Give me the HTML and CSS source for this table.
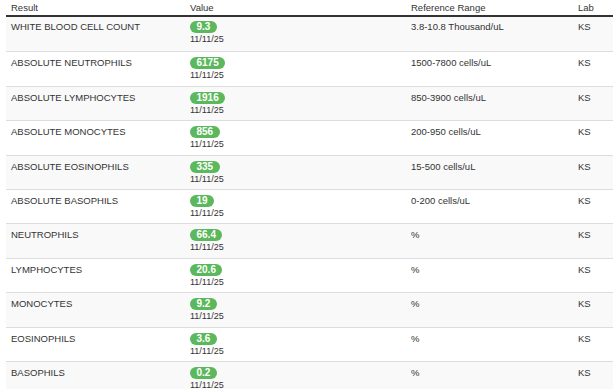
FILE: index.html
```html
<!DOCTYPE html>
<html>
<head>
<meta charset="utf-8">
<link rel="stylesheet" href="styles.css">
</head>
<body>
<table class="results">
  <colgroup>
    <col class="c-name"><col class="c-val"><col class="c-range"><col class="c-lab">
  </colgroup>
  <thead>
    <tr><th>Result</th><th>Value</th><th>Reference Range</th><th>Lab</th></tr>
  </thead>
  <tbody>
    <tr><td>WHITE BLOOD CELL COUNT</td><td><span class="badge">9.3</span><div class="date">11/11/25</div></td><td>3.8-10.8 Thousand/uL</td><td>KS</td></tr>
    <tr><td>ABSOLUTE NEUTROPHILS</td><td><span class="badge">6175</span><div class="date">11/11/25</div></td><td>1500-7800 cells/uL</td><td>KS</td></tr>
    <tr><td>ABSOLUTE LYMPHOCYTES</td><td><span class="badge">1916</span><div class="date">11/11/25</div></td><td>850-3900 cells/uL</td><td>KS</td></tr>
    <tr><td>ABSOLUTE MONOCYTES</td><td><span class="badge">856</span><div class="date">11/11/25</div></td><td>200-950 cells/uL</td><td>KS</td></tr>
    <tr><td>ABSOLUTE EOSINOPHILS</td><td><span class="badge">335</span><div class="date">11/11/25</div></td><td>15-500 cells/uL</td><td>KS</td></tr>
    <tr><td>ABSOLUTE BASOPHILS</td><td><span class="badge">19</span><div class="date">11/11/25</div></td><td>0-200 cells/uL</td><td>KS</td></tr>
    <tr><td>NEUTROPHILS</td><td><span class="badge">66.4</span><div class="date">11/11/25</div></td><td>%</td><td>KS</td></tr>
    <tr><td>LYMPHOCYTES</td><td><span class="badge">20.6</span><div class="date">11/11/25</div></td><td>%</td><td>KS</td></tr>
    <tr><td>MONOCYTES</td><td><span class="badge">9.2</span><div class="date">11/11/25</div></td><td>%</td><td>KS</td></tr>
    <tr><td>EOSINOPHILS</td><td><span class="badge">3.6</span><div class="date">11/11/25</div></td><td>%</td><td>KS</td></tr>
    <tr><td>BASOPHILS</td><td><span class="badge">0.2</span><div class="date">11/11/25</div></td><td>%</td><td>KS</td></tr>
  </tbody>
</table>
</body>
</html>
```
FILE: styles.css
```css
html, body {
  margin: 0;
  padding: 0;
  background: #fff;
}
body {
  font-family: "Liberation Sans", Arial, sans-serif;
  font-size: 9.5px;
  color: #333;
}
.results {
  margin-left: 6px;
  width: 607px;
  border-collapse: collapse;
  table-layout: fixed;
}
.c-name { width: 179px; }
.c-val { width: 221px; }
.c-range { width: 167px; }
.c-lab { width: 40px; }
.results th {
  text-align: left;
  font-weight: normal;
  padding: 2px 5px 1px;
  line-height: 12px;
  border-bottom: 2px solid #333;
}
.results td {
  vertical-align: top;
  padding: 5px 5px 4.4px;
  line-height: 12px;
  border-top: 1px solid #ddd;
}
.results tbody tr:first-child td {
  border-top: none;
  padding-top: 4px;
  padding-bottom: 6.4px;
}
.results tbody tr:nth-child(odd) td {
  background: #f9f9f9;
}
.badge {
  display: inline-block;
  background: #5cb85c;
  color: #fff;
  font-weight: bold;
  font-size: 10px;
  line-height: 12px;
  padding: 0 6.5px;
  border-radius: 7px;
  vertical-align: top;
}
.date {
  font-size: 9px;
  line-height: 11px;
  margin-top: 1px;
}
```
